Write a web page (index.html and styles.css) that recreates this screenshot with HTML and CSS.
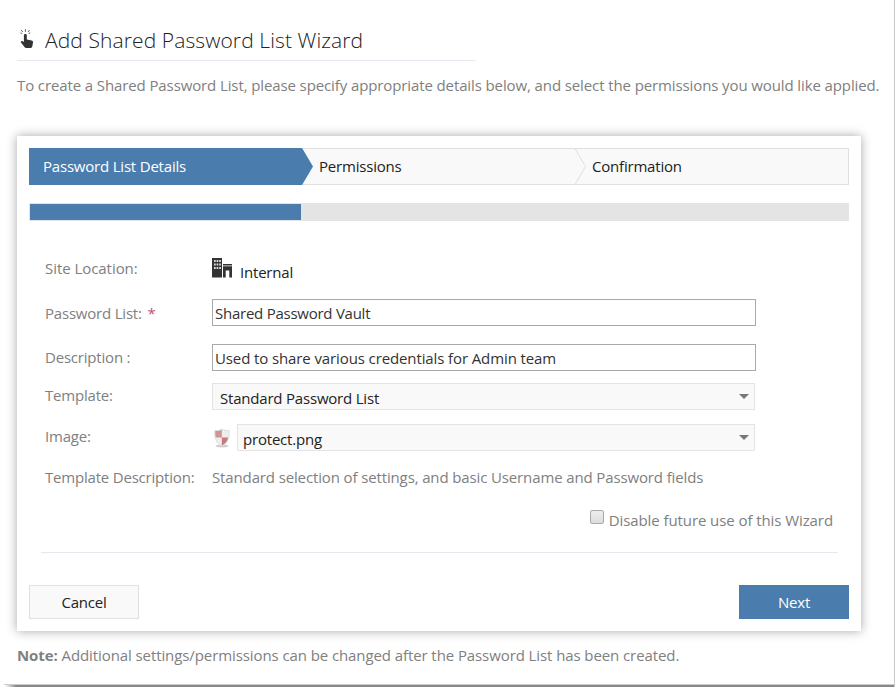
FILE: index.html
```html
<!DOCTYPE html>
<html lang="en">

<head>
    <meta charset="UTF-8">
    <meta name="viewport" content="width=device-width, initial-scale=1.0">
    <title>Add Shared Password List Wizard</title>
    <link rel="stylesheet" href="styles.css">
</head>

<body>

    <div class="page">
        <header class="page-header">
            <svg class="title-icon" width="14" height="20" viewBox="0 0 14 20">
                <path d="M3.900 6.200c0-1.700 2.900-1.700 2.900 0v4.300l4.800 1c1.100.2 1.600.9 1.400 2l-.6 3.500c-.2 1.300-.8 2-2 2H6.200c-.8 0-1.300-.3-1.700-.9L.6 12.900c.8-1.200 1.800-1.100 2.600-.4l.7.6z" fill="#333" />
                <path d="M5.400.200v2.600M1.200 1l1.500 2M9.600 1L8.100 3M.5 3.900l1.600.6M10.300 3.900l-1.600.6" stroke="#666" stroke-width="1" fill="none" />
            </svg>
            <h1>Add Shared Password List Wizard</h1>
        </header>

        <p class="intro">To create a Shared Password List, please specify appropriate details below, and select the permissions you would like applied.</p>

        <!-- Wizard -->
        <form class="wizard">
            <div class="steps">
                <div class="step active">
                    <span>Password List Details</span>
                    <svg class="arrow" width="12" height="37" viewBox="0 0 12 37">
                        <path d="M0 0L11 18.500L0 37z" fill="#4a7dad" />
                    </svg>
                </div>
                <div class="step">
                    <span>Permissions</span>
                    <svg class="arrow" width="12" height="37" viewBox="0 0 12 37">
                        <path d="M0 .5L10.500 18.500L0 36.500" fill="#f9f9f9" stroke="#e0e0e0" />
                    </svg>
                </div>
                <div class="step">
                    <span>Confirmation</span>
                </div>
            </div>

            <div class="progress">
                <div class="progress-bar"></div>
            </div>

            <!-- Password List Details -->
            <div class="row row-site">
                <label>Site Location:</label>
                <div class="site">
                    <svg width="20" height="20" viewBox="0 0 20 20">
                        <path d="M0 0h10v19.500H0zM11 6h9v1.500h-9zM11 8.300h9v11.200h-2.700v-7h-3.600v7H11z" fill="#333" />
                        <path d="M2 2h1.700v2H2zM4.600 2h1.700v2H4.600zM7.200 2h1.700v2H7.200zM2 5.500h1.700v2H2zM4.600 5.500h1.700v2H4.600zM7.200 5.500h1.700v2H7.200zM2 9h1.700v2H2zM4.600 9h1.700v2H4.600zM7.200 9h1.700v2H7.200z" fill="#ddd" />
                    </svg>
                    <span class="site-name">Internal</span>
                </div>
            </div>
            <div class="row row-list">
                <label>Password List: <span class="required">*</span></label>
                <input class="input-list" type="text" value="Shared Password Vault">
            </div>
            <div class="row row-description">
                <label>Description :</label>
                <input class="input-description" type="text" value="Used to share various credentials for Admin team">
            </div>
            <div class="row row-template">
                <label>Template:</label>
                <div class="select">
                    <span>Standard Password List</span>
                    <span class="caret"></span>
                </div>
            </div>
            <div class="row row-image">
                <label>Image:</label>
                <svg class="shield" width="18" height="20" viewBox="0 0 18 20">
                    <ellipse cx="9" cy="18" rx="6.500" ry="1.500" fill="#aaa" opacity=".6" />
                    <path d="M9 1C7 2.600 4.500 3 2 2.300C1.200 9 2.800 15 9 18.300C15.200 15 16.800 9 16 2.300C13.500 3 11 2.600 9 1z" fill="#eee" stroke="#ddd" />
                    <path d="M8.800 1.600C7 2.900 4.600 3.400 2.400 2.900C2.100 5.200 2.200 7.500 2.800 9.500h6z" fill="#d09494" />
                    <path d="M8.800 9.500h6.400c-.9 3.500-2.800 6.300-6.400 8.200z" fill="#c67a7a" />
                </svg>
                <div class="select">
                    <span>protect.png</span>
                    <span class="caret"></span>
                </div>
            </div>
            <div class="row row-info">
                <label>Template Description:</label>
                <span class="info">Standard selection of settings, and basic Username and Password fields</span>
            </div>

            <div class="disable">
                <input type="checkbox" id="disableWizard">
                <label for="disableWizard">Disable future use of this Wizard</label>
            </div>

            <div class="buttons">
                <button type="button" class="btn">Cancel</button>
                <button type="button" class="btn btn-primary">Next</button>
            </div>
        </form>

        <p class="note"><strong>Note:</strong> Additional settings/permissions can be changed after the Password List has been created.</p>
    </div>

</body>

</html>
```
FILE: styles.css
```css
* {
    margin: 0;
    padding: 0;
    box-sizing: border-box;
}

body {
    background: #fff;
    font-family: 'Segoe UI', 'Open Sans', sans-serif;
    font-size: 15px;
    letter-spacing: -0.2px;
    line-height: 20px;
    color: #808080;
    white-space: nowrap;
    overflow: hidden;
}

.page {
    height: 687px;
    padding: 20px 0 0 17px;
    border-right: 1px solid #c8c8c8;
    background: linear-gradient(to right, transparent 5px, #888 16px) left bottom / 100% 2px no-repeat,
        linear-gradient(to right, transparent 4px, #ccc 4px) left 684px / 100% 1px no-repeat;
}

.page-header {
    display: flex;
    width: 459px;
    height: 41px;
    padding-left: 3px;
    border-bottom: 1px solid #e7e7ef;
}

.title-icon {
    margin: 9px 11px 0 0;
}

h1 {
    font-size: 21px;
    font-weight: 300;
    line-height: 41px;
    letter-spacing: 0.1px;
    color: #222;
}

.intro {
    margin-top: 14px;
    letter-spacing: -0.11px;
}

.wizard {
    width: 844px;
    height: 495px;
    margin-top: 41px;
    padding: 12px;
    background: #fff;
    box-shadow: 0 0 10px rgba(0, 0, 0, 0.35);
}

.steps {
    display: flex;
    height: 37px;
    background: #f9f9f9;
    border: 1px solid #e0e0e0;
}

.step {
    position: relative;
    width: 274px;
    padding-left: 17px;
    line-height: 34px;
    color: #222;
}

.step.active {
    margin: -1px 0 -1px -1px;
    padding: 1px 0 0 14px;
    background: #4a7dad;
    color: #fff;
}

.arrow {
    position: absolute;
    left: 100%;
    top: 0;
}

.step:not(.active) .arrow {
    top: -1px;
}

.progress {
    height: 18px;
    margin: 18px 0 35px;
    padding: 1px;
    background: #e4e4e4;
}

.progress-bar {
    width: 33.1%;
    height: 16px;
    background: #4a7dad;
}

.row {
    display: flex;
    align-items: center;
    width: 726px;
    height: 27px;
    padding-left: 16px;
    margin-bottom: 14px;
}

.row > label {
    width: 167px;
    flex-shrink: 0;
}

.row-site {
    margin-bottom: 16px;
}

.row-site > label {
    margin-top: -3px;
    letter-spacing: -0.05px;
}

.row-list {
    width: 727px;
    margin-bottom: 18px;
}

.row-description {
    width: 727px;
    margin-bottom: 12px;
}

.row-description > label {
    margin-top: -2px;
}

.row-template > label,
.row-image > label {
    margin-top: -4px;
}

.row-info {
    height: 23px;
    margin-bottom: 21px;
}

.site {
    display: flex;
    gap: 8px;
    color: #222;
}

.site-name {
    padding-top: 4px;
}

.required {
    margin-left: 2px;
    color: #c0507a;
}

input[type="text"] {
    flex: 1;
    height: 27px;
    padding: 1px 2px 0;
    border: 1px solid #a9a9a9;
    font: inherit;
    letter-spacing: -0.11px;
    color: #333;
}

.input-list[type="text"] {
    letter-spacing: -0.25px;
}

.select {
    display: flex;
    align-items: center;
    justify-content: space-between;
    flex: 1;
    height: 27px;
    padding: 2px 5px 0 7px;
    background: #f9f9f9;
    border: 1px solid #e4e4e4;
    color: #222;
}

.row-image .select {
    padding-left: 5px;
}

.caret {
    margin-top: -2px;
    border: 5px solid transparent;
    border-top-color: #777;
    border-bottom: 0;
}

.shield {
    margin: 0 6px 0 1px;
}

.info {
    letter-spacing: -0.13px;
}

.disable {
    display: flex;
    justify-content: flex-end;
    margin-right: 16px;
    height: 21px;
    letter-spacing: -0.08px;
}

.disable input {
    appearance: none;
    width: 14px;
    height: 14px;
    margin: 1px 5px 0 0;
    border: 1px solid #aaa;
    border-radius: 2px;
    background: linear-gradient(#eee, #ddd);
}

.disable label {
    padding-top: 1px;
}

.buttons {
    display: flex;
    justify-content: space-between;
    position: relative;
    margin-top: 22px;
    padding-top: 33px;
}

/* divider above the buttons */
.buttons::before {
    content: "";
    position: absolute;
    top: 0;
    left: 12px;
    right: 11px;
    border-top: 1px solid #e7e7ef;
}

.btn {
    width: 110px;
    height: 34px;
    background: #f9f9f9;
    border: 1px solid #e0e0e0;
    font: inherit;
    letter-spacing: inherit;
    color: #222;
}

.btn-primary {
    background: #4a7dad;
    border-color: #4a7dad;
    color: #fff;
}

.note {
    margin-top: 14px;
    letter-spacing: -0.09px;
}
```
